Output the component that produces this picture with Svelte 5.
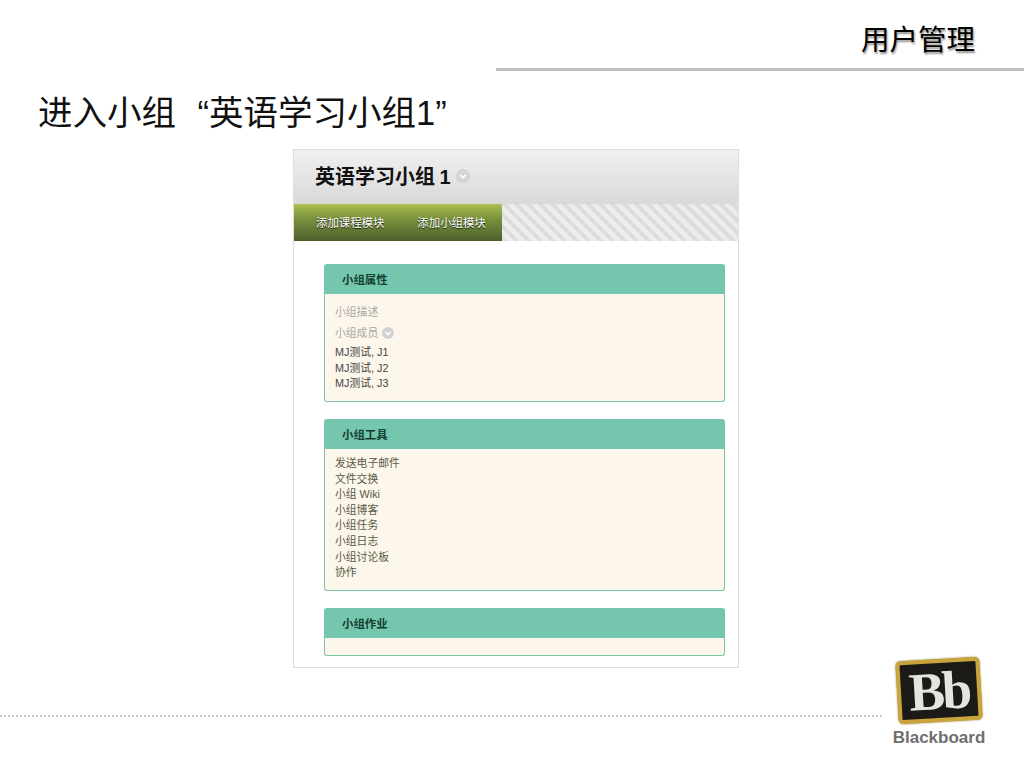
<script>
  let members = ['MJ测试, J1', 'MJ测试, J2', 'MJ测试, J3'];
  let tools = ['发送电子邮件', '文件交换', '小组 Wiki', '小组博客', '小组任务', '小组日志', '小组讨论板', '协作'];
</script>

<div class="slide">
  <header class="top">
    <div class="section">用户管理</div>
    <div class="rule"></div>
  </header>

  <h1>进入小组 “英语学习小组1”</h1>

  <div class="panel">
    <div class="panel-head">
      <span class="group-name">英语学习小组 1</span>
      <svg class="chev big" viewBox="0 0 14 14"><circle cx="7" cy="7" r="7" fill="#d4d4d4"/><path d="M4 5.8 7 8.8 10 5.8" fill="none" stroke="#fff" stroke-width="1.8"/></svg>
    </div>
    <div class="actions">
      <div class="buttons">
        <span>添加课程模块</span>
        <span>添加小组模块</span>
      </div>
      <div class="stripes"></div>
    </div>

    <div class="modules">
      <section class="module">
        <h2>小组属性</h2>
        <div class="body props">
          <div class="muted desc">小组描述</div>
          <div class="muted members-label">
            小组成员
            <svg class="chev" viewBox="0 0 14 14"><circle cx="7" cy="7" r="7" fill="#d2d2d2"/><path d="M4 5.8 7 8.8 10 5.8" fill="none" stroke="#fff" stroke-width="1.8"/></svg>
          </div>
          {#each members as m}
            <div class="line">{m}</div>
          {/each}
        </div>
      </section>

      <section class="module">
        <h2>小组工具</h2>
        <div class="body tools">
          {#each tools as t}
            <div class="line tool">{t}</div>
          {/each}
        </div>
      </section>

      <section class="module">
        <h2>小组作业</h2>
        <div class="body empty"></div>
      </section>
    </div>
  </div>

  <footer class="bottom">
    <div class="dots"></div>
    <div class="brand">
      <div class="logo"><span>Bb</span></div>
      <div class="word">Blackboard</div>
    </div>
  </footer>
</div>

<style>
  :global(body) {
    margin: 0;
    background: #fff;
  }

  .slide {
    width: 1024px;
    height: 768px;
    position: relative;
    overflow: hidden;
    display: flex;
    flex-direction: column;
    font-family: "Liberation Sans", "Noto Sans CJK SC", sans-serif;
    color: #000;
  }

  .top {
    display: flex;
    flex-direction: column;
    align-items: flex-end;
    height: 71px;
  }
  .section {
    margin-top: 20px;
    margin-right: 49px;
    font-size: 28.5px;
    line-height: 40px;
    height: 48px;
    text-shadow: 1px 2px 2px rgba(0, 0, 0, 0.45);
  }
  .rule {
    width: 528px;
    height: 3px;
    background: #bdbdbd;
  }

  h1 {
    margin: 19px 0 0 38px;
    font-weight: 400;
    font-size: 34.5px;
    line-height: 46px;
    word-spacing: 12px;
    height: 46px;
    color: #111;
  }

  .panel {
    width: 444px;
    height: 517px;
    margin: 13px 0 0 293px;
    border: 1px solid #ddd;
    background: #fff;
    display: flex;
    flex-direction: column;
    flex: none;
  }
  .panel-head {
    height: 54px;
    display: flex;
    align-items: center;
    padding: 0 0 4px 21px;
    box-sizing: border-box;
    background: linear-gradient(#f0f0f0, #d9d9d9);
  }
  .group-name {
    font-size: 20px;
    font-weight: 700;
    color: #111;
    word-spacing: -1px;
  }
  .chev {
    width: 12px;
    height: 12px;
    margin-left: 1px;
    vertical-align: -2px;
  }
  .chev.big {
    width: 14px;
    height: 14px;
    margin-left: 5px;
    margin-top: 2px;
  }

  .actions {
    display: flex;
    height: 37px;
  }
  .buttons {
    width: 208px;
    display: flex;
    gap: 33px;
    align-items: center;
    padding: 0 0 2px 22px;
    box-sizing: border-box;
    background: linear-gradient(#acc251, #7f9640 35%, #4b5f29);
    color: #fff;
    font-size: 11.4px;
    text-shadow: 0 1px 1px rgba(0, 0, 0, 0.8);
  }
  .stripes {
    flex: 1;
    background: repeating-linear-gradient(45deg, #dcdcdc 0 4px, #ececec 4px 8.5px);
  }

  .modules {
    padding: 23px 13px 0 30px;
    display: flex;
    flex-direction: column;
    gap: 17px;
  }
  .module h2 {
    margin: 0;
    height: 30px;
    line-height: 32px;
    padding-left: 18px;
    font-size: 11.4px;
    font-weight: 700;
    color: #123f30;
    background: #75c6ae;
    border-radius: 3px 3px 0 0;
  }
  .body {
    background: #fdf6ea;
    border: 1px solid #7cc4a8;
    border-top: none;
    border-radius: 0 0 3px 3px;
    padding-left: 10px;
    font-size: 10.8px;
    color: #444;
  }
  .props {
    height: 108px;
    box-sizing: border-box;
    padding-top: 11px;
  }
  .muted {
    color: #a8a8a8;
  }
  .desc {
    height: 21px;
    line-height: 15px;
  }
  .members-label {
    height: 19px;
    line-height: 15px;
  }
  .line {
    line-height: 15.5px;
  }
  .tools {
    height: 142px;
    box-sizing: border-box;
    padding-top: 7px;
  }
  .tool {
    color: #575a48;
    line-height: 15.6px;
  }
  .empty {
    height: 18px;
    box-sizing: border-box;
  }

  .bottom {
    position: absolute;
    left: 0;
    right: 0;
    top: 650px;
    display: flex;
  }
  .dots {
    width: 882px;
    height: 0;
    margin-top: 65px;
    border-top: 2px dotted #c8c8c8;
  }
  .brand {
    margin-left: 11px;
    width: 92px;
    display: flex;
    flex-direction: column;
    align-items: center;
  }
  .logo {
    width: 76px;
    height: 55px;
    margin-top: 9px;
    border: 4px solid #c9a43c;
    border-radius: 5px;
    background: #1b1a17;
    transform: rotate(-3.3deg);
    display: flex;
    align-items: center;
    justify-content: center;
    box-shadow: 0 0 2px #8a6d1f;
  }
  .logo span {
    font-family: "Liberation Serif", serif;
    font-size: 54px;
    font-weight: 700;
    line-height: 50px;
    letter-spacing: -3px;
    color: #e4e4e0;
  }
  .word {
    margin-top: 6px;
    font-size: 17px;
    font-weight: 700;
    line-height: 20px;
    color: #6f6f6f;
  }
</style>
